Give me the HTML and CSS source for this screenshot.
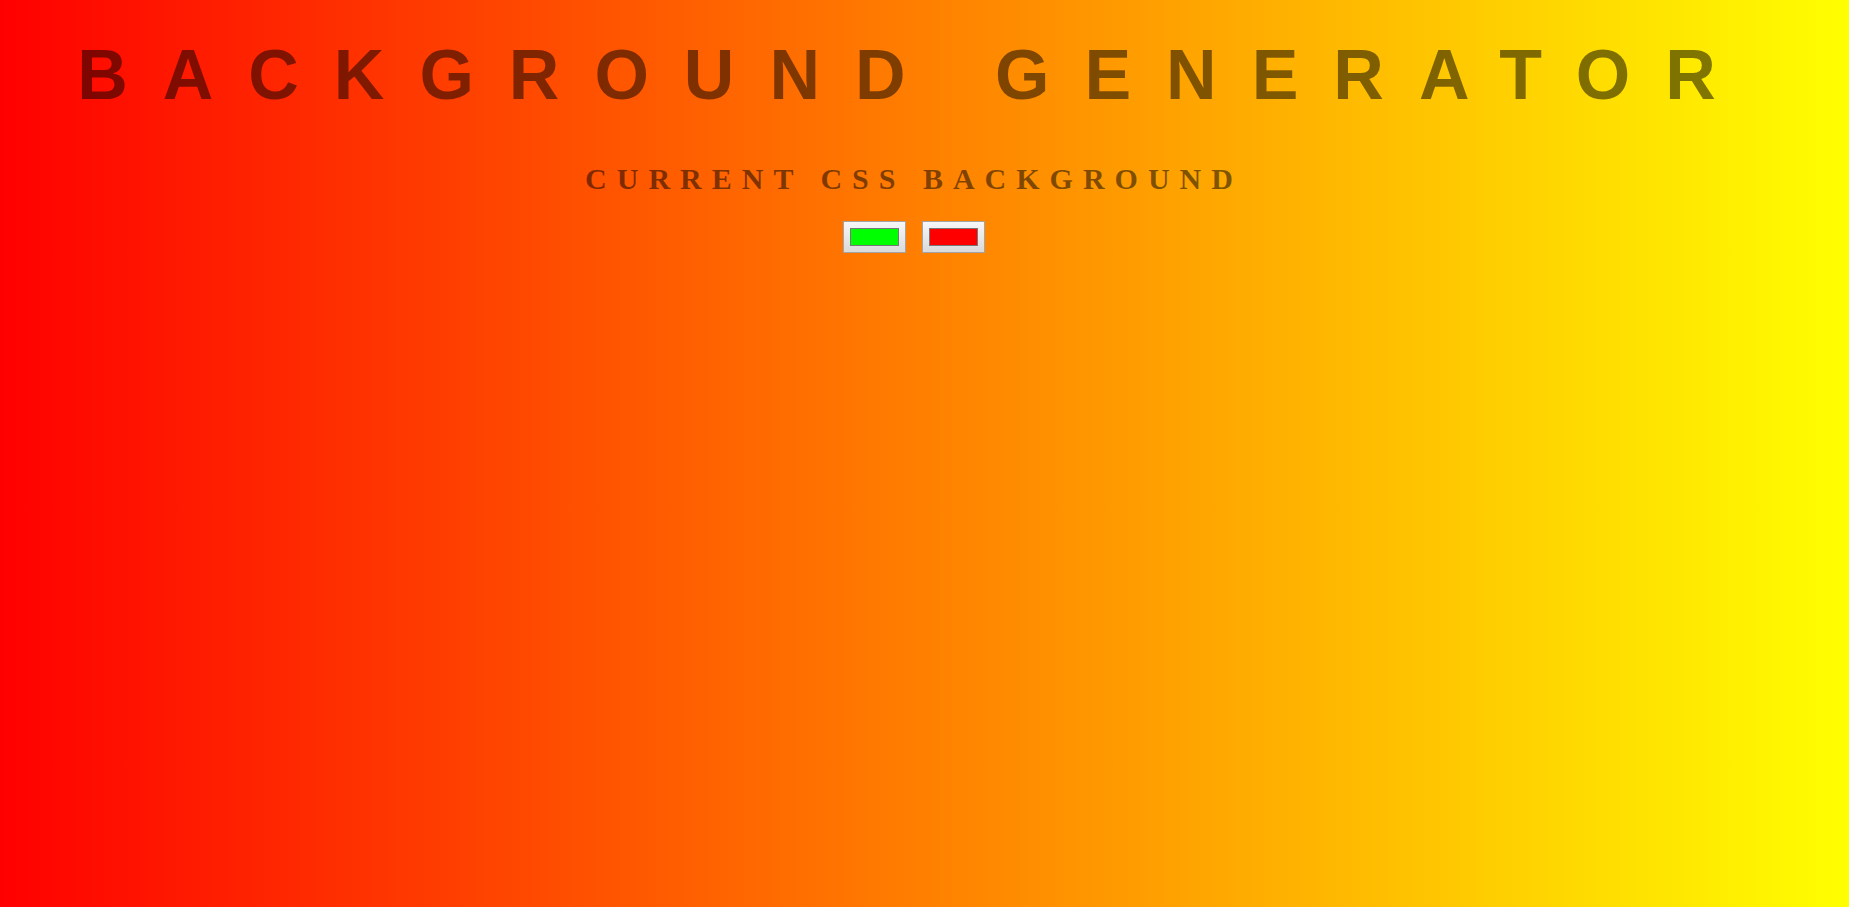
FILE: index.html
```html
<!DOCTYPE html>
<html lang="en">
<head>
<meta charset="utf-8">
<title>Background Generator</title>
<link rel="stylesheet" href="styles.css">
</head>
<body>
  <h1 class="title">Background Generator</h1>
  <h3 class="subtitle">Current CSS Background</h3>
  <div class="pickers">
    <input class="picker" type="color" value="#00ff00">
    <input class="picker" type="color" value="#ff0000">
  </div>
</body>
</html>
```
FILE: styles.css
```css
html, body {
  height: 100%;
}
body {
  box-sizing: border-box;
  margin: 0;
  padding-right: 21px;
  background: linear-gradient(to right, #ff0000, #ffff00);
  font-size: 20px;
  font-family: "Liberation Serif", serif;
  letter-spacing: 0.5em;
  color: rgba(0, 0, 0, 0.5);
  text-align: center;
  text-transform: uppercase;
}
.title {
  margin: 35px 0 0;
  font: 700 70px/80px "Liberation Sans", Arial, sans-serif;
  letter-spacing: 0.5em;
}
.subtitle {
  margin: 46px 0 0;
  font: 700 30px/36px "Liberation Serif", serif;
}
.pickers {
  display: flex;
  justify-content: center;
  gap: 16px;
  margin-top: 24px;
}
.picker {
  -webkit-appearance: none;
  appearance: none;
  box-sizing: border-box;
  width: 63px;
  height: 32px;
  margin: 0;
  padding: 6px;
  border: 1px solid #a3a3a3;
  background: linear-gradient(#f7f7f7, #dadada);
  cursor: pointer;
}
.picker::-webkit-color-swatch-wrapper {
  padding: 0;
}
.picker::-webkit-color-swatch {
  border: 1px solid #777777;
}
```
